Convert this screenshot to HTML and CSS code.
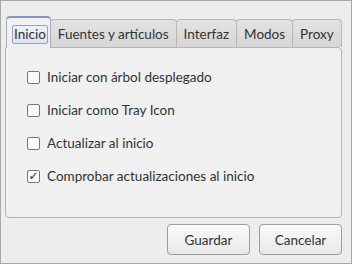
FILE: index.html
```html
<!DOCTYPE html>
<html lang="es">
<head>
    <meta charset="UTF-8">
    <title>Preferencias</title>
    <link rel="stylesheet" href="styles.css">
</head>
<body>
    <div class="window">
        <div class="tabs">
            <div class="tab active"><span class="focus">Inicio</span></div>
            <div class="tab">Fuentes y artículos</div>
            <div class="tab">Interfaz</div>
            <div class="tab">Modos</div>
            <div class="tab">Proxy</div>
        </div>
        <div class="panel">
            <label class="option"><span class="check"></span>Iniciar con árbol desplegado</label>
            <label class="option"><span class="check"></span>Iniciar como Tray Icon</label>
            <label class="option"><span class="check"></span>Actualizar al inicio</label>
            <label class="option"><span class="check checked">&#10003;</span>Comprobar actualizaciones al inicio</label>
        </div>
        <div class="buttons">
            <button class="btn">Guardar</button>
            <button class="btn">Cancelar</button>
        </div>
    </div>
</body>
</html>
```

FILE: styles.css
```css
body {
    margin: 0;
    font-family: 'Lato', 'DejaVu Sans', sans-serif;
    font-size: 13.5px;
    color: #2e3436;
}
.window {
    width: 352px;
    height: 264px;
    box-sizing: border-box;
    border: 1px solid #a8a8a8;
    background: #ededed;
    padding: 14px 9px 0 4px;
}
.tabs {
    display: flex;
    align-items: flex-end;
    height: 32px;
    padding-left: 1px;
}
.tab {
    flex-shrink: 0;
    white-space: nowrap;
    height: 28px;
    box-sizing: border-box;
    padding: 0 7px;
    display: flex;
    align-items: center;
    border: 1px solid #b8b8b8;
    border-bottom: none;
    border-radius: 4px 4px 0 0;
    background: linear-gradient(#e2e2e2, #d6d6d6);
    margin-right: -1px;
}
.tab.active {
    height: 32px;
    padding: 3px 2px 0 5px;
    background: #f0f0f0;
    border-color: #a9acb8;
    border-top: 2px solid #8a92be;
    position: relative;
    z-index: 1;
    margin-bottom: -1px;
}
.focus {
    border: 1px solid #9aa2b8;
    border-radius: 2px;
    background: linear-gradient(#eef1f7, #dfe4ee);
    padding: 0 1px 1px 1px;
}
.panel {
    height: 171px;
    box-sizing: border-box;
    border: 1px solid #b4b4b4;
    border-radius: 0 4px 4px 4px;
    background: #f0f0f0;
    padding: 21px 0 0 21px;
    display: flex;
    flex-direction: column;
    gap: 17px;
}
.option {
    display: flex;
    align-items: center;
    height: 16px;
}
.check {
    width: 11px;
    height: 11px;
    border: 1px solid #777;
    border-radius: 2px;
    background: #fafafa;
    margin-right: 7px;
    font-family: 'DejaVu Sans', sans-serif;
    font-size: 12px;
    font-weight: bold;
    line-height: 11px;
    text-align: center;
    color: #222;
}
.buttons {
    display: flex;
    justify-content: flex-end;
    gap: 9px;
    padding-top: 6px;
}
.btn {
    width: 83px;
    height: 31px;
    border: 1px solid #9e9e9e;
    border-radius: 4px;
    background: linear-gradient(#fafafa, #e8e8e8);
    font-family: 'Lato', 'DejaVu Sans', sans-serif;
    font-size: 13.5px;
    color: #2e3436;
}
```
